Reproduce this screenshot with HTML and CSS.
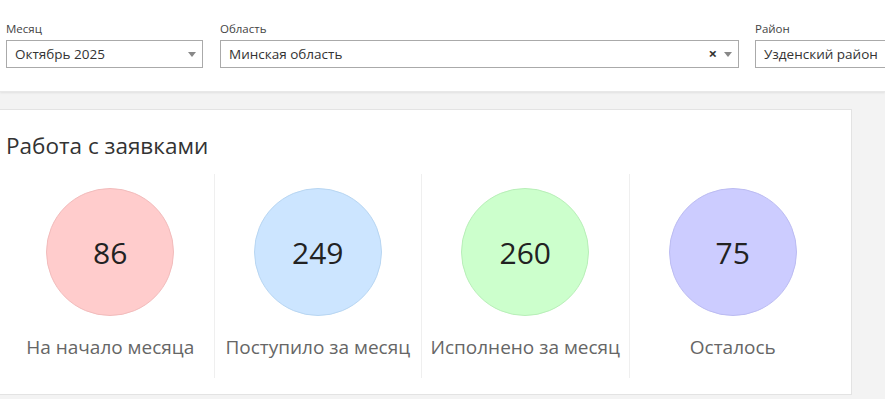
FILE: index.html
```html
<!DOCTYPE html>
<html lang="ru">
<head>
<meta charset="utf-8">
<link rel="stylesheet" href="styles.css">
</head>
<body>
<header class="filters">
  <div class="field f-month">
    <label class="lbl">Месяц</label>
    <div class="select"><span class="val">Октябрь 2025</span><span class="arrow"></span></div>
  </div>
  <div class="field f-region">
    <label class="lbl">Область</label>
    <div class="select"><span class="val">Минская область</span><span class="clear">×</span><span class="arrow"></span></div>
  </div>
  <div class="field f-district">
    <label class="lbl">Район</label>
    <div class="select"><span class="val">Узденский район</span><span class="arrow"></span></div>
  </div>
</header>
<main class="main">
  <section class="card">
    <h2 class="title">Работа с заявками</h2>
    <div class="stats">
      <div class="stat"><div class="circle c-red">86</div><div class="cap">На начало месяца</div></div>
      <div class="stat"><div class="circle c-blue">249</div><div class="cap">Поступило за месяц</div></div>
      <div class="stat"><div class="circle c-green">260</div><div class="cap">Исполнено за месяц</div></div>
      <div class="stat"><div class="circle c-purple">75</div><div class="cap">Осталось</div></div>
    </div>
  </section>
</main>
</body>
</html>
```
FILE: styles.css
```css
* { box-sizing: border-box; }
html, body { margin: 0; padding: 0; }
body {
  background: #f3f3f3;
  font-family: "Open Sans", "Noto Sans", sans-serif;
  color: #333;
  overflow: hidden;
  width: 885px;
  height: 399px;
}
.filters {
  height: 92px;
  background: #fff;
  display: flex;
  gap: 17px;
  padding: 21px 0 0 6px;
  box-shadow: 0 1px 2px rgba(0,0,0,0.08);
  border-bottom: 1px solid #e8e8e8;
  overflow: hidden;
  position: relative;
}
.field { display: flex; flex-direction: column; flex-shrink: 0; }
.f-month { width: 197px; }
.f-region { width: 519px; margin-right: -1px; }
.f-district { width: 197px; }
.lbl {
  font-size: 11.5px;
  line-height: 16px;
  color: #444;
  margin-bottom: 3px;
}
.select {
  height: 28px;
  border: 1px solid #aaa;
  background: #fff;
  display: flex;
  align-items: center;
  padding: 0 6px 0 8px;
}
.val {
  flex: 1;
  font-size: 13.5px;
  color: #333;
  white-space: nowrap;
}
.arrow {
  width: 0; height: 0;
  border-left: 4px solid transparent;
  border-right: 4px solid transparent;
  border-top: 5px solid #888;
  margin-left: 7px;
}
.clear {
  font-size: 15px;
  font-weight: 700;
  color: #333;
  line-height: 1;
  margin-top: -1px;
}
.main { padding-top: 17px; }
.card {
  background: #fff;
  border: 1px solid #e3e3e3;
  margin-left: -8px;
  width: 860px;
  height: 286px;
  padding: 19px 14px 0 13px;
}
.title {
  margin: 0;
  font-weight: 400;
  font-size: 22.5px;
  line-height: 34px;
  color: #333;
}
.stats {
  display: grid;
  grid-template-columns: repeat(4, 207.5px);
  margin-top: 11px;
}
.stat {
  height: 204px;
  display: flex;
  flex-direction: column;
  align-items: center;
  padding-top: 14px;
  border-left: 1px solid #efefef;
}
.stat:first-child { border-left-color: transparent; }
.circle {
  width: 128px;
  height: 128px;
  border-radius: 50%;
  display: flex;
  align-items: center;
  justify-content: center;
  font-size: 30px;
  color: #222;
  border: 1px solid;
}
.c-red { background: #ffcccc; border-color: #f2bcbc; }
.c-blue { background: #cce5ff; border-color: #b8d6f2; }
.c-green { background: #ccffcc; border-color: #b8efb8; }
.c-purple { background: #ccccff; border-color: #bcbcf2; }
.cap {
  margin-top: 18px;
  font-size: 19px;
  line-height: 26px;
  color: #666;
  white-space: nowrap;
}
```
